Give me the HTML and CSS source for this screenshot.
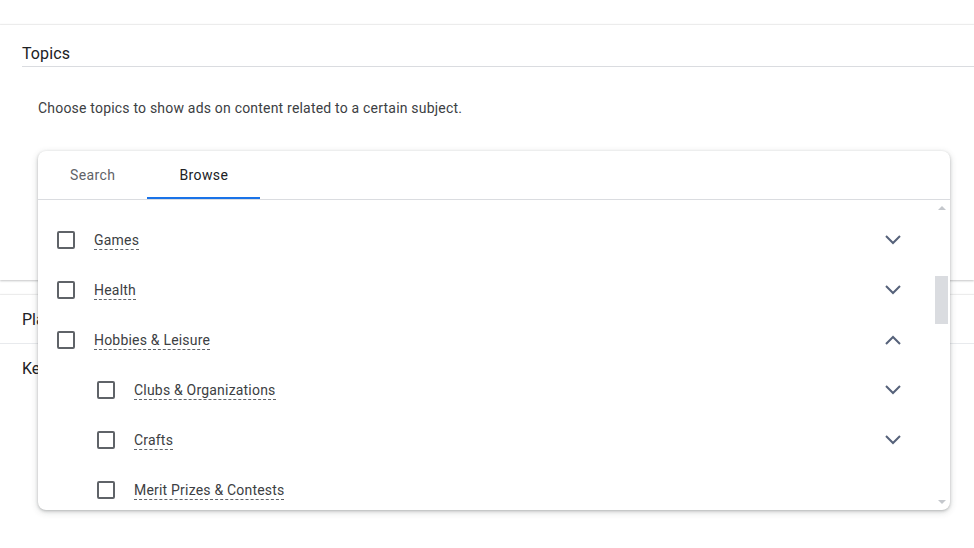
FILE: index.html
```html
<!DOCTYPE html>
<html lang="en">
<head>
    <meta charset="UTF-8">
    <meta name="viewport" content="width=device-width, initial-scale=1.0">
    <title>Topics</title>
    <link rel="stylesheet" href="styles.css">
</head>
<body>

    <div class="page">
        <div class="panel expanded">
            <div class="panel-head">Topics</div>
            <div class="panel-body">
                <p class="hint">Choose topics to show ads on content related to a certain subject.</p>
            </div>
        </div>

        <div class="panel-group">
            <div class="panel-row">Places</div>
            <div class="panel-row">Keywords</div>
        </div>
    </div>

    <div class="picker">
        <div class="tabs">
            <div class="tab">Search</div>
            <div class="tab active">Browse</div>
        </div>

        <div class="list">
            <div class="item">
                <span class="box"></span>
                <span class="label">Games</span>
                <svg class="chev" viewBox="0 0 16 10"><polyline points="1,1 8,8 15,1"/></svg>
            </div>
            <div class="item">
                <span class="box"></span>
                <span class="label">Health</span>
                <svg class="chev" viewBox="0 0 16 10"><polyline points="1,1 8,8 15,1"/></svg>
            </div>
            <div class="item">
                <span class="box"></span>
                <span class="label">Hobbies &amp; Leisure</span>
                <svg class="chev" viewBox="0 0 16 10"><polyline points="1,9 8,2 15,9"/></svg>
            </div>
            <div class="item sub">
                <span class="box"></span>
                <span class="label">Clubs &amp; Organizations</span>
                <svg class="chev" viewBox="0 0 16 10"><polyline points="1,1 8,8 15,1"/></svg>
            </div>
            <div class="item sub">
                <span class="box"></span>
                <span class="label">Crafts</span>
                <svg class="chev" viewBox="0 0 16 10"><polyline points="1,1 8,8 15,1"/></svg>
            </div>
            <div class="item sub">
                <span class="box"></span>
                <span class="label">Merit Prizes &amp; Contests</span>
            </div>

            <!-- нарисованная полоса прокрутки -->
            <div class="scrollbar">
                <span class="arrow up"></span>
                <span class="thumb"></span>
                <span class="arrow down"></span>
            </div>
        </div>
    </div>

</body>
</html>
```

FILE: styles.css
```css
body {
    margin: 0;
    font-family: Roboto, "Liberation Sans", Arial, sans-serif;
    background-color: white;
    color: #202124;
    overflow: hidden;
}
.page {
    padding-top: 25px;
}
.panel {
    background-color: white;
}
.expanded {
    height: 255px;
    box-shadow: 0 1px 2px rgba(60, 64, 67, 0.3), 0 -1px 1px rgba(60, 64, 67, 0.08);
}
.panel-head {
    margin-left: 22px;
    padding: 19px 0 2px;
    line-height: 20px;
    font-size: 16px;
    letter-spacing: 0.1px;
    color: #202124;
    border-bottom: 1px solid #dadce0;
}
.panel-body {
    padding-left: 38px;
}
.hint {
    margin: 30px 0 0;
    font-size: 14px;
    line-height: 22px;
    letter-spacing: 0.2px;
    color: #3c4043;
}
.panel-group {
    margin-top: 15px;
    background-color: white;
    box-shadow: 0 1px 2px rgba(60, 64, 67, 0.3), 0 -1px 1px rgba(60, 64, 67, 0.08);
}
.panel-row {
    height: 48px;
    line-height: 50px;
    padding-left: 22px;
    font-size: 16px;
    color: #202124;
}
.panel-row + .panel-row {
    border-top: 1px solid #e8eaed;
}

/* всплывающее окно выбора тем */
.picker {
    position: absolute;
    left: 38px;
    top: 151px;
    width: 912px;
    height: 359px;
    background-color: white;
    border-radius: 8px;
    box-shadow: 0 1px 3px rgba(60, 64, 67, 0.3), 0 2px 6px 1px rgba(60, 64, 67, 0.15);
    overflow: hidden;
}
.tabs {
    display: flex;
    height: 48px;
    border-bottom: 1px solid #dadce0;
}
.tab {
    padding: 0 32px;
    line-height: 48px;
    font-size: 14px;
    color: #5f6368;
    letter-spacing: 0.4px;
}
.tab.active {
    color: #202124;
    line-height: 48px;
    height: 46px;
    border-bottom: 2px solid #1a73e8;
}
.list {
    position: relative;
    height: 310px;
    padding-top: 15px;
    box-sizing: border-box;
    overflow: hidden;
}
.item {
    display: flex;
    align-items: center;
    height: 50px;
    padding-left: 19px;
    padding-right: 49px;
}
.item.sub {
    padding-left: 59px;
}
.box {
    width: 14px;
    height: 14px;
    border: 2px solid #5f6368;
    border-radius: 2px;
    margin-right: 19px;
    flex-shrink: 0;
}
.label {
    font-size: 14px;
    line-height: 18px;
    letter-spacing: 0.2px;
    color: #3c4043;
    border-bottom: 1px dashed #5f6368;
}
.chev {
    margin-left: auto;
    width: 16px;
    height: 10px;
    fill: none;
    stroke: #56627a;
    stroke-width: 2;
}
.scrollbar {
    position: absolute;
    right: 2px;
    top: 0;
    bottom: 0;
    width: 13px;
}
.thumb {
    position: absolute;
    left: 0;
    top: 76px;
    width: 13px;
    height: 48px;
    background-color: #dadce0;
}
.arrow {
    position: absolute;
    left: 3px;
    width: 0;
    height: 0;
    border-left: 4px solid transparent;
    border-right: 4px solid transparent;
}
.arrow.up {
    top: 6px;
    border-bottom: 4px solid #c4c7cc;
}
.arrow.down {
    bottom: 6px;
    border-top: 4px solid #c4c7cc;
}
```
